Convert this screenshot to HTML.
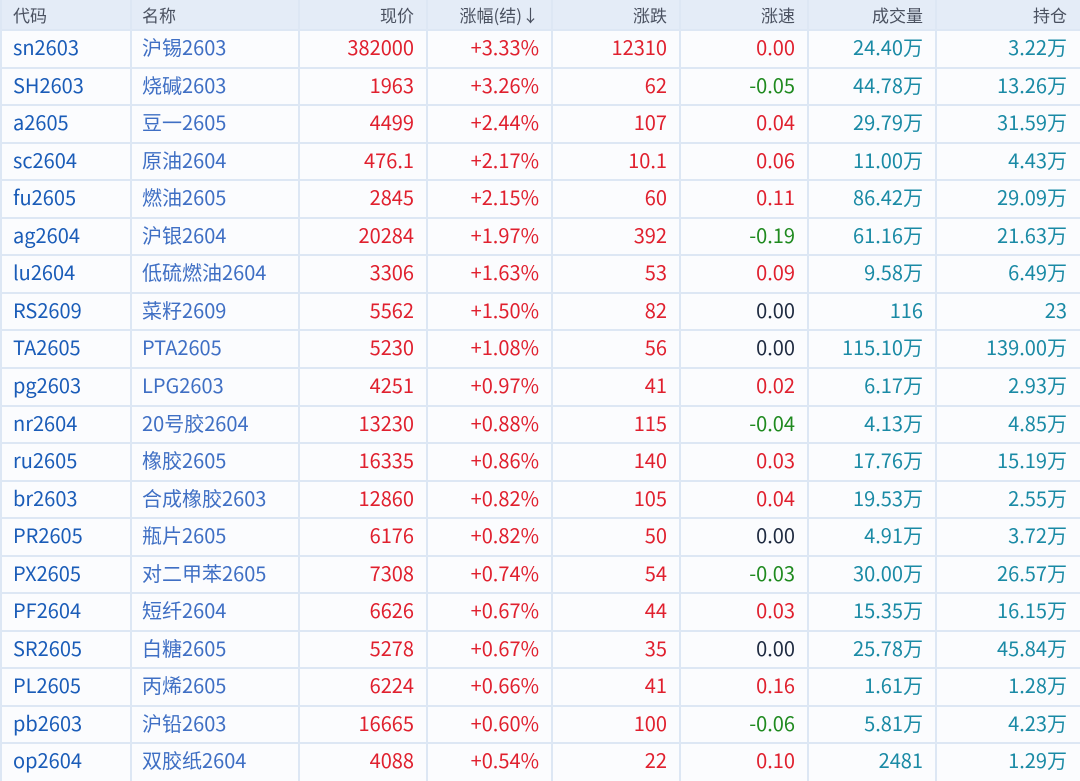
<!DOCTYPE html>
<html><head><meta charset="utf-8"><style>
body{margin:0;width:1080px;height:781px;overflow:hidden;background:#fbfcfe;font-family:"Noto Sans CJK SC","Liberation Sans",sans-serif;font-size:20px;position:relative}
.hd{position:absolute;left:0;top:0;width:1080px;height:30px;background:#e4ecf7}
.r{position:absolute;left:0;width:1080px;height:37.55px;border-top:2px solid #dde7f4;box-sizing:border-box}
.c{position:absolute;top:0;height:100%;line-height:32px;box-sizing:border-box;white-space:nowrap}
.hd .c{color:#4a5160;font-size:17px;line-height:30px}
.l{text-align:left;padding-left:13px}.rt{text-align:right;padding-right:13px}
.c1{left:0;width:131px}.c2{left:131px;width:168px;padding-left:11px}.c3{left:299px;width:128px}.c4{left:427px;width:125px}
.c5{left:552px;width:128px}.c6{left:680px;width:128px}.c7{left:808px;width:128px}.c8{left:936px;width:144px}
.v{position:absolute;top:0;width:2px;height:781px;background:#dde7f4}
.cd{color:#1a5cb8}.nm{color:#3f6fc4}.red{color:#e0202e}.grn{color:#1f8a1f}.blk{color:#1e2a40}.tl{color:#1a8aa5}
</style></head><body>
<div class="hd"><div class="c c1 l">代码</div><div class="c c2 l">名称</div><div class="c c3 rt">现价</div><div class="c c4 rt">涨幅(结)↓</div><div class="c c5 rt">涨跌</div><div class="c c6 rt">涨速</div><div class="c c7 rt">成交量</div><div class="c c8 rt">持仓</div></div>
<div class="r" style="top:29px"><div class="c c1 l cd">sn2603</div><div class="c c2 l nm">沪锡2603</div><div class="c c3 rt red">382000</div><div class="c c4 rt red">+3.33%</div><div class="c c5 rt red">12310</div><div class="c c6 rt red">0.00</div><div class="c c7 rt tl">24.40万</div><div class="c c8 rt tl">3.22万</div></div>
<div class="r" style="top:66.55px"><div class="c c1 l cd">SH2603</div><div class="c c2 l nm">烧碱2603</div><div class="c c3 rt red">1963</div><div class="c c4 rt red">+3.26%</div><div class="c c5 rt red">62</div><div class="c c6 rt grn">-0.05</div><div class="c c7 rt tl">44.78万</div><div class="c c8 rt tl">13.26万</div></div>
<div class="r" style="top:104.1px"><div class="c c1 l cd">a2605</div><div class="c c2 l nm">豆一2605</div><div class="c c3 rt red">4499</div><div class="c c4 rt red">+2.44%</div><div class="c c5 rt red">107</div><div class="c c6 rt red">0.04</div><div class="c c7 rt tl">29.79万</div><div class="c c8 rt tl">31.59万</div></div>
<div class="r" style="top:141.65px"><div class="c c1 l cd">sc2604</div><div class="c c2 l nm">原油2604</div><div class="c c3 rt red">476.1</div><div class="c c4 rt red">+2.17%</div><div class="c c5 rt red">10.1</div><div class="c c6 rt red">0.06</div><div class="c c7 rt tl">11.00万</div><div class="c c8 rt tl">4.43万</div></div>
<div class="r" style="top:179.2px"><div class="c c1 l cd">fu2605</div><div class="c c2 l nm">燃油2605</div><div class="c c3 rt red">2845</div><div class="c c4 rt red">+2.15%</div><div class="c c5 rt red">60</div><div class="c c6 rt red">0.11</div><div class="c c7 rt tl">86.42万</div><div class="c c8 rt tl">29.09万</div></div>
<div class="r" style="top:216.75px"><div class="c c1 l cd">ag2604</div><div class="c c2 l nm">沪银2604</div><div class="c c3 rt red">20284</div><div class="c c4 rt red">+1.97%</div><div class="c c5 rt red">392</div><div class="c c6 rt grn">-0.19</div><div class="c c7 rt tl">61.16万</div><div class="c c8 rt tl">21.63万</div></div>
<div class="r" style="top:254.3px"><div class="c c1 l cd">lu2604</div><div class="c c2 l nm">低硫燃油2604</div><div class="c c3 rt red">3306</div><div class="c c4 rt red">+1.63%</div><div class="c c5 rt red">53</div><div class="c c6 rt red">0.09</div><div class="c c7 rt tl">9.58万</div><div class="c c8 rt tl">6.49万</div></div>
<div class="r" style="top:291.85px"><div class="c c1 l cd">RS2609</div><div class="c c2 l nm">菜籽2609</div><div class="c c3 rt red">5562</div><div class="c c4 rt red">+1.50%</div><div class="c c5 rt red">82</div><div class="c c6 rt blk">0.00</div><div class="c c7 rt tl">116</div><div class="c c8 rt tl">23</div></div>
<div class="r" style="top:329.4px"><div class="c c1 l cd">TA2605</div><div class="c c2 l nm">PTA2605</div><div class="c c3 rt red">5230</div><div class="c c4 rt red">+1.08%</div><div class="c c5 rt red">56</div><div class="c c6 rt blk">0.00</div><div class="c c7 rt tl">115.10万</div><div class="c c8 rt tl">139.00万</div></div>
<div class="r" style="top:366.95px"><div class="c c1 l cd">pg2603</div><div class="c c2 l nm">LPG2603</div><div class="c c3 rt red">4251</div><div class="c c4 rt red">+0.97%</div><div class="c c5 rt red">41</div><div class="c c6 rt red">0.02</div><div class="c c7 rt tl">6.17万</div><div class="c c8 rt tl">2.93万</div></div>
<div class="r" style="top:404.5px"><div class="c c1 l cd">nr2604</div><div class="c c2 l nm">20号胶2604</div><div class="c c3 rt red">13230</div><div class="c c4 rt red">+0.88%</div><div class="c c5 rt red">115</div><div class="c c6 rt grn">-0.04</div><div class="c c7 rt tl">4.13万</div><div class="c c8 rt tl">4.85万</div></div>
<div class="r" style="top:442.05px"><div class="c c1 l cd">ru2605</div><div class="c c2 l nm">橡胶2605</div><div class="c c3 rt red">16335</div><div class="c c4 rt red">+0.86%</div><div class="c c5 rt red">140</div><div class="c c6 rt red">0.03</div><div class="c c7 rt tl">17.76万</div><div class="c c8 rt tl">15.19万</div></div>
<div class="r" style="top:479.6px"><div class="c c1 l cd">br2603</div><div class="c c2 l nm">合成橡胶2603</div><div class="c c3 rt red">12860</div><div class="c c4 rt red">+0.82%</div><div class="c c5 rt red">105</div><div class="c c6 rt red">0.04</div><div class="c c7 rt tl">19.53万</div><div class="c c8 rt tl">2.55万</div></div>
<div class="r" style="top:517.15px"><div class="c c1 l cd">PR2605</div><div class="c c2 l nm">瓶片2605</div><div class="c c3 rt red">6176</div><div class="c c4 rt red">+0.82%</div><div class="c c5 rt red">50</div><div class="c c6 rt blk">0.00</div><div class="c c7 rt tl">4.91万</div><div class="c c8 rt tl">3.72万</div></div>
<div class="r" style="top:554.7px"><div class="c c1 l cd">PX2605</div><div class="c c2 l nm">对二甲苯2605</div><div class="c c3 rt red">7308</div><div class="c c4 rt red">+0.74%</div><div class="c c5 rt red">54</div><div class="c c6 rt grn">-0.03</div><div class="c c7 rt tl">30.00万</div><div class="c c8 rt tl">26.57万</div></div>
<div class="r" style="top:592.25px"><div class="c c1 l cd">PF2604</div><div class="c c2 l nm">短纤2604</div><div class="c c3 rt red">6626</div><div class="c c4 rt red">+0.67%</div><div class="c c5 rt red">44</div><div class="c c6 rt red">0.03</div><div class="c c7 rt tl">15.35万</div><div class="c c8 rt tl">16.15万</div></div>
<div class="r" style="top:629.8px"><div class="c c1 l cd">SR2605</div><div class="c c2 l nm">白糖2605</div><div class="c c3 rt red">5278</div><div class="c c4 rt red">+0.67%</div><div class="c c5 rt red">35</div><div class="c c6 rt blk">0.00</div><div class="c c7 rt tl">25.78万</div><div class="c c8 rt tl">45.84万</div></div>
<div class="r" style="top:667.35px"><div class="c c1 l cd">PL2605</div><div class="c c2 l nm">丙烯2605</div><div class="c c3 rt red">6224</div><div class="c c4 rt red">+0.66%</div><div class="c c5 rt red">41</div><div class="c c6 rt red">0.16</div><div class="c c7 rt tl">1.61万</div><div class="c c8 rt tl">1.28万</div></div>
<div class="r" style="top:704.9px"><div class="c c1 l cd">pb2603</div><div class="c c2 l nm">沪铅2603</div><div class="c c3 rt red">16665</div><div class="c c4 rt red">+0.60%</div><div class="c c5 rt red">100</div><div class="c c6 rt grn">-0.06</div><div class="c c7 rt tl">5.81万</div><div class="c c8 rt tl">4.23万</div></div>
<div class="r" style="top:742.45px"><div class="c c1 l cd">op2604</div><div class="c c2 l nm">双胶纸2604</div><div class="c c3 rt red">4088</div><div class="c c4 rt red">+0.54%</div><div class="c c5 rt red">22</div><div class="c c6 rt red">0.10</div><div class="c c7 rt tl">2481</div><div class="c c8 rt tl">1.29万</div></div>
<div class="v" style="left:0"></div><div class="v" style="left:130px"></div><div class="v" style="left:298px"></div><div class="v" style="left:426px"></div><div class="v" style="left:551px"></div><div class="v" style="left:679px"></div><div class="v" style="left:807px"></div><div class="v" style="left:935px"></div>
</body></html>
